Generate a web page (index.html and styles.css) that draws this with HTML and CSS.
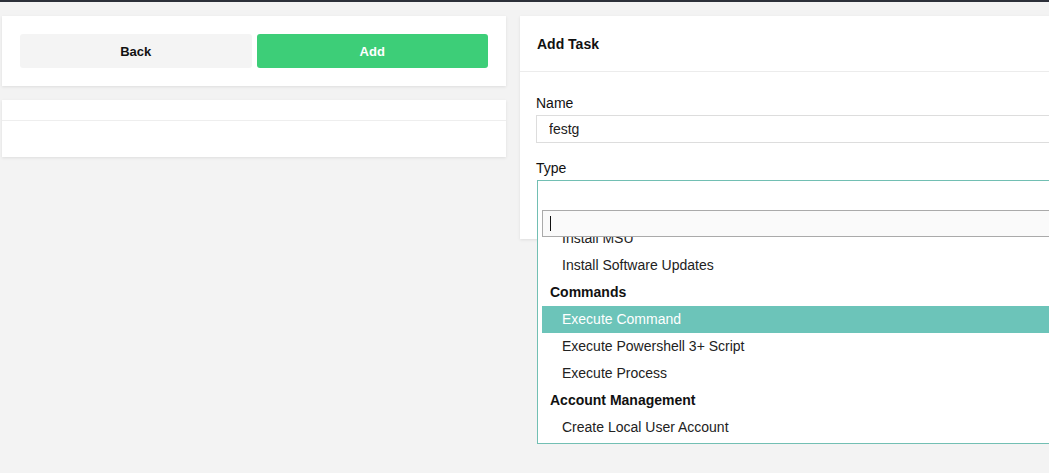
FILE: index.html
```html
<!DOCTYPE html>
<html lang="en">
<head>
  <meta charset="UTF-8" />
  <title>Add Task</title>
  <link rel="stylesheet" href="styles.css">
</head>
<body>
  <div class="topbar"></div>

  <main class="layout">
    <div class="side">
      <div class="card actions">
        <button class="btn btn-back">Back</button>
        <button class="btn btn-add">Add</button>
      </div>
      <div class="card task-list">
        <div class="task-list-head"></div>
        <div class="task-list-body"></div>
      </div>
    </div>

    <section class="card task-form">
      <div class="card-header">Add Task</div>
      <div class="card-body">
        <div class="field">
          <label>Name</label>
          <input type="text" class="text-input" value="festg">
        </div>
        <div class="field">
          <label>Type</label>
          <div class="select open">
            <div class="select-box"></div>
            <div class="dropdown">
              <div class="search"><span class="caret"></span></div>
              <div class="results">
                <ul>
                  <li class="option">Install MSU</li>
                  <li class="option">Install Software Updates</li>
                  <li class="group">Commands</li>
                  <li class="option active">Execute Command</li>
                  <li class="option">Execute Powershell 3+ Script</li>
                  <li class="option">Execute Process</li>
                  <li class="group">Account Management</li>
                  <li class="option">Create Local User Account</li>
                </ul>
              </div>
            </div>
          </div>
        </div>
      </div>
    </section>
  </main>
</body>
</html>
```

FILE: styles.css
```css
:root {
  --bg-color: #f3f3f3;
  --text-color: #111;
  --green: #3dce78;
  --teal: #6cc4b9;
  --teal-border: #72bfb3;
}

* {
  margin: 0;
  padding: 0;
  box-sizing: border-box;
}

body {
  font-family: "Liberation Sans", Arial, sans-serif;
  font-size: 14px;
  color: var(--text-color);
  background-color: var(--bg-color);
  overflow: hidden;
  height: 473px;
}

.topbar {
  height: 2px;
  background-color: #2c3039;
}

.layout {
  display: grid;
  grid-template-columns: 504px 580px;
  gap: 14px;
  align-items: start;
  padding: 14px 0 0 2px;
}

.side {
  display: flex;
  flex-direction: column;
  gap: 14px;
}

.card {
  background-color: white;
  box-shadow: 0 1px 3px rgba(0, 0, 0, 0.09);
}

.actions {
  display: grid;
  grid-template-columns: 1fr 1fr;
  gap: 5px;
  padding: 18px;
}

.btn {
  height: 34px;
  border: none;
  border-radius: 3px;
  font-family: inherit;
  font-size: 13px;
  font-weight: bold;
  cursor: pointer;
}

.btn-back {
  background-color: #f4f4f4;
  color: #111;
}

.btn-add {
  background-color: var(--green);
  color: white;
}

.task-list-head {
  height: 21px;
  border-bottom: 1px solid #eee;
}

.task-list-body {
  height: 36px;
}

.card-header {
  height: 56px;
  padding: 0 17px;
  display: flex;
  align-items: center;
  font-weight: bold;
  border-bottom: 1px solid #ececec;
}

.card-body {
  padding: 22px 16px 33px;
}

.field + .field {
  margin-top: 16px;
}

.field label {
  display: block;
  line-height: 18px;
  margin-bottom: 3px;
}

.text-input {
  display: block;
  width: 100%;
  height: 28px;
  padding: 0 12px;
  border: 1px solid #ddd;
  font-family: inherit;
  font-size: 14px;
  color: #222;
  outline: none;
}

.select {
  position: relative;
  margin-left: 1px;
}

.select-box {
  height: 26px;
  border: 1px solid var(--teal-border);
  border-bottom: none;
}

.dropdown {
  position: absolute;
  top: 100%;
  left: 0;
  right: 0;
  background-color: white;
  border: 1px solid var(--teal-border);
  border-top: none;
  padding: 4px 0 1px 4px;
}

.search {
  height: 27px;
  border: 1px solid #aaa;
  background-color: #fafafa;
  padding: 5px 7px;
}

.caret {
  display: block;
  width: 1px;
  height: 15px;
  background-color: #111;
}

.results {
  height: 205px;
  overflow: hidden;
}

.results ul {
  list-style: none;
  margin-top: -12px;
}

.results li {
  height: 27px;
  line-height: 27px;
  white-space: nowrap;
}

.option {
  padding-left: 20px;
  color: #222;
}

.group {
  padding-left: 8px;
  font-weight: bold;
}

.option.active {
  background-color: var(--teal);
  color: white;
}
```
